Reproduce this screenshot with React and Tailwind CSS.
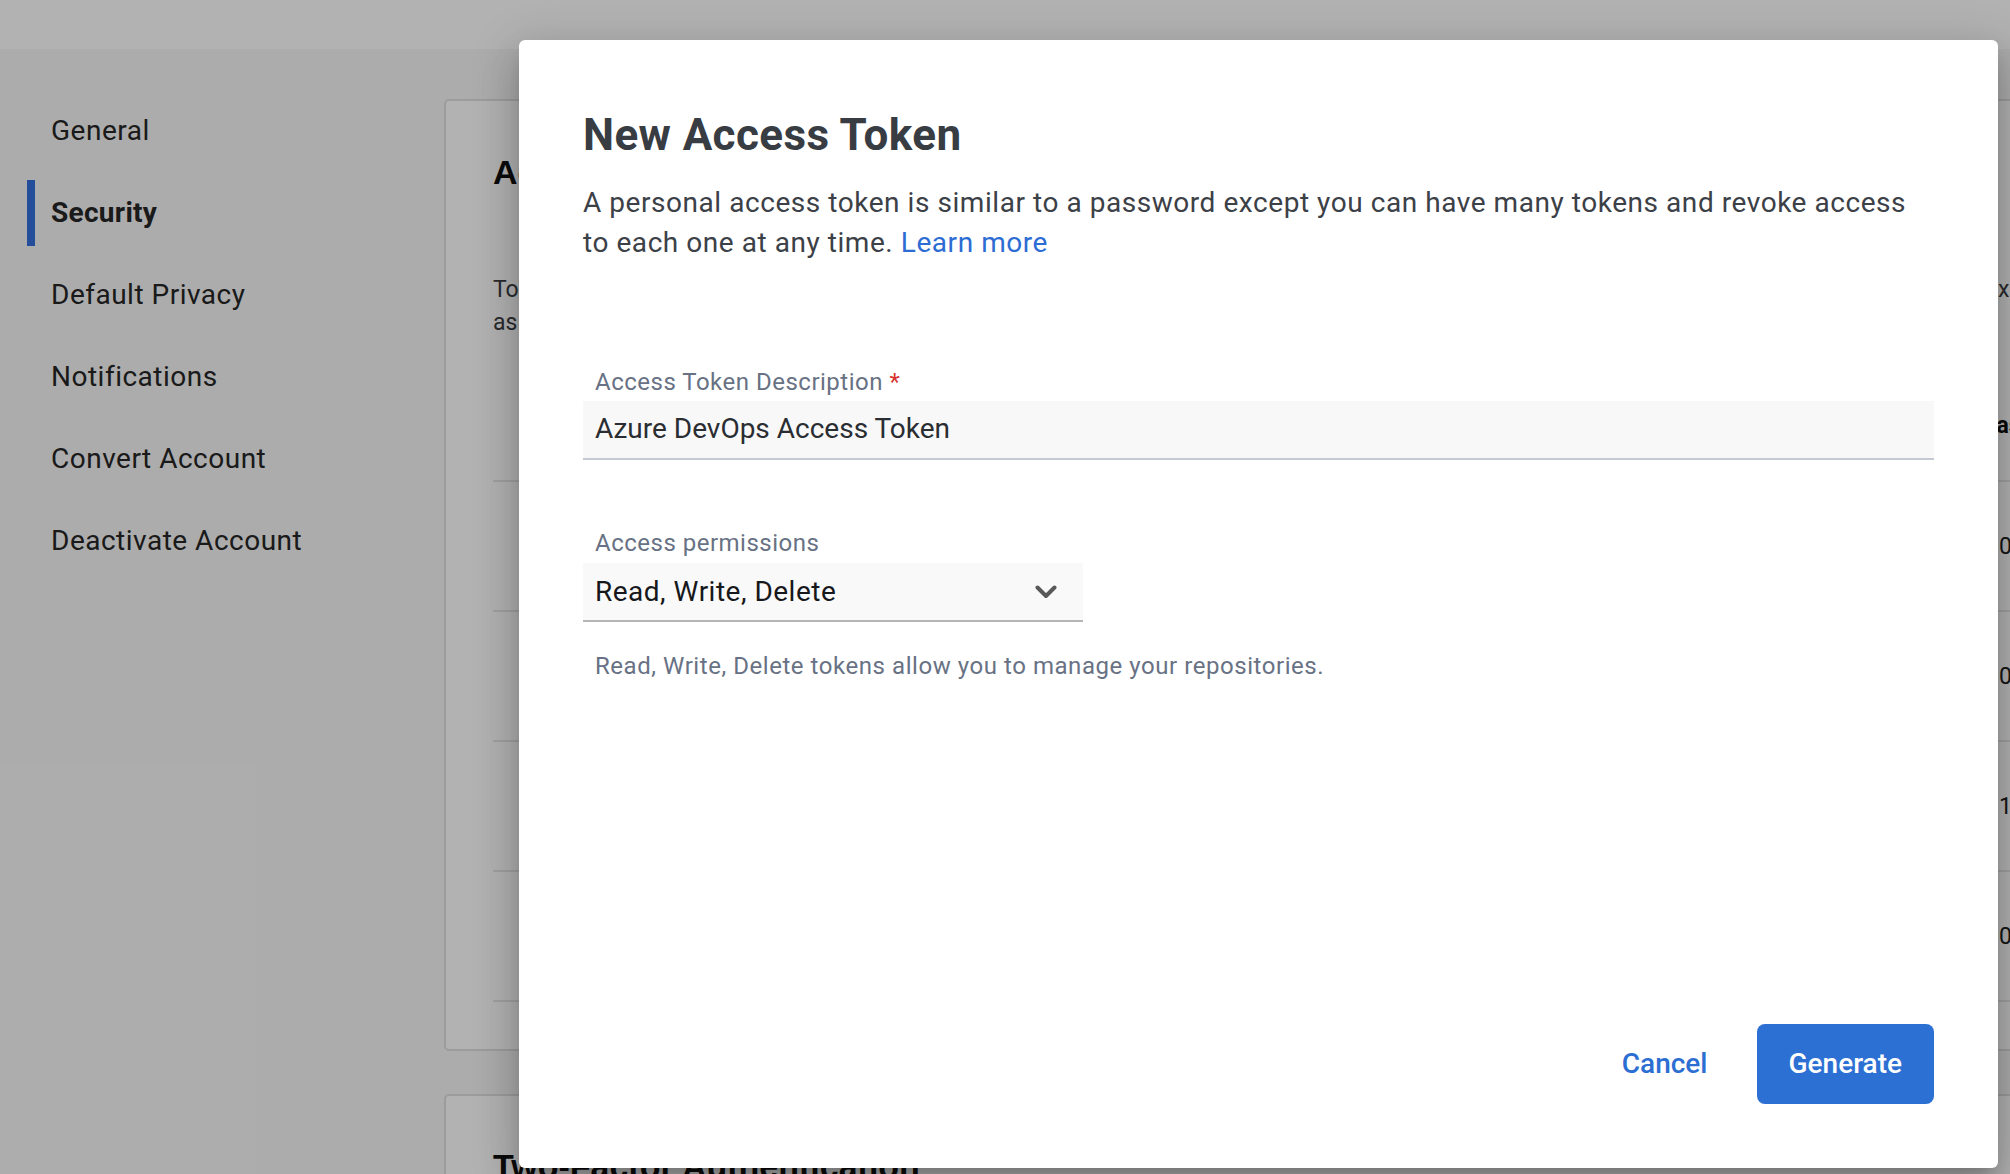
import React from "react";

const navItems = [
  { label: "General" },
  { label: "Security", active: true },
  { label: "Default Privacy" },
  { label: "Notifications" },
  { label: "Convert Account" },
  { label: "Deactivate Account" },
];

const rows = ["04/12/2023", "09/30/2023", "11/02/2023", "01/15/2024"];

export default function App() {
  return (
    <div className="relative h-[1174px] w-[2010px] overflow-hidden bg-[#f7f7f7] font-['Roboto',sans-serif]">
      {/* page header */}
      <header className="h-[49px] bg-white" />

      <div className="flex">
        {/* sidebar */}
        <nav className="flex w-[444px] shrink-0 flex-col gap-[16px] pl-[27px] pt-[49px]">
          {navItems.map((item) => (
            <div
              key={item.label}
              className={
                item.active
                  ? "flex h-[66px] items-center border-l-[8px] border-[#3470dc] pl-[16px] text-[28px] font-bold tracking-[0.3px] text-[#262626]"
                  : "flex h-[66px] items-center border-l-[8px] border-transparent pl-[16px] text-[28px] tracking-[0.5px] text-[#262626]"
              }
            >
              {item.label}
            </div>
          ))}
        </nav>

        {/* main content */}
        <main className="flex flex-col gap-[43px] pt-[50px]">
          <section className="w-[1700px] rounded-[5px] border-2 border-[#e0e0e0] bg-white pb-[47px] pl-[47px] pt-[52px]">
            <h2 className="font-['Liberation_Sans',sans-serif] text-[34px] font-bold leading-[38px] text-[#111]">Access Tokens</h2>
            <div className="mt-[82px] w-[1514px] text-[23px] leading-[33px] text-[#3b3e42]">
              <p className="whitespace-nowrap text-justify [text-align-last:justify]">
                To use a personal access token in place of your password when you sign in to the Docker CLI, enter it at the password prompt. You can also set an ex
              </p>
              <p className="whitespace-nowrap">
                as many tokens as you need and revoke them at any time from this page.
              </p>
            </div>
            <div className="mr-[47px] mt-[70px] border-b-2 border-[#e6e6e6] pb-[38px]">
              <div className="pl-[1491px] text-[23px] font-bold leading-[33px] text-[#111]">Last Used</div>
            </div>
            {rows.map((r) => (
              <div key={r} className="mr-[47px] flex h-[130px] items-center border-b-2 border-[#e6e6e6] pt-[3px]">
                <span className="pl-[1506px] text-[23px] text-[#222]">{r}</span>
              </div>
            ))}
          </section>

          <section className="w-[1700px] rounded-[5px] border-2 border-[#e0e0e0] bg-white pl-[47px] pt-[51px]">
            <h2 className="font-['Liberation_Sans',sans-serif] text-[34px] font-bold leading-[38px] text-[#111]">Two-Factor Authentication</h2>
            <div className="h-[200px]" />
          </section>
        </main>
      </div>

      {/* backdrop */}
      <div className="absolute inset-0 bg-black/30" />

      {/* modal */}
      <div className="absolute left-[519px] top-[40px] flex h-[1128px] w-[1479px] flex-col rounded-[6px] bg-white px-[64px] pb-[64px] pt-[70px] shadow-[0_11px_15px_-7px_rgba(0,0,0,0.2),0_24px_38px_3px_rgba(0,0,0,0.14),0_9px_46px_8px_rgba(0,0,0,0.12)]">
        <h1 className="text-[44px] font-bold leading-[50px] tracking-[0.4px] text-[#383c43]">New Access Token</h1>
        <p className="mt-[23px] text-[28px] leading-[40px] tracking-[0.55px] text-[#3c4047]">
          A personal access token is similar to a password except you can have many tokens and revoke access
          <br />
          to each one at any time. <span className="text-[#2c6cd3]">Learn more</span>
        </p>

        <label className="mt-[104px] pl-[12px] text-[24px] leading-[30px] tracking-[0.5px] text-[#687284]">
          Access Token Description <span className="text-[#d8322f]">*</span>
        </label>
        <div className="mt-[4px] flex h-[59px] items-center border-b-2 border-[#c5c9d2] bg-[#f8f8f8] pl-[12px] pb-[2px] text-[28px] text-[#2a2d32]">
          Azure DevOps Access Token
        </div>

        <label className="mt-[68px] pl-[12px] text-[24px] leading-[30px] tracking-[0.5px] text-[#687284]">
          Access permissions
        </label>
        <div className="mt-[5px] flex h-[59px] w-[500px] items-center justify-between border-b-2 border-[#b5b5b5] bg-[#f9f9f9] pl-[12px] pr-[26px] text-[28px] tracking-[0.5px] text-[#16181b]">
          <span>Read, Write, Delete</span>
          <svg width="22" height="14" viewBox="0 0 22 14" fill="none">
            <path d="M2.5 2.5 L11 11 L19.5 2.5" stroke="#595959" strokeWidth="4" strokeLinecap="round" strokeLinejoin="round" />
          </svg>
        </div>

        <p className="mt-[29px] pl-[12px] text-[24px] leading-[30px] tracking-[0.55px] text-[#687284]">
          Read, Write, Delete tokens allow you to manage your repositories.
        </p>

        <div className="mt-auto flex justify-end gap-[17px]">
          <button className="h-[80px] px-[32px] text-[28px] font-medium text-[#2c6ed2]">Cancel</button>
          <button className="h-[80px] rounded-[8px] bg-[#2d70d3] px-[32px] text-[28px] font-medium text-white">Generate</button>
        </div>
      </div>
    </div>
  );
}
